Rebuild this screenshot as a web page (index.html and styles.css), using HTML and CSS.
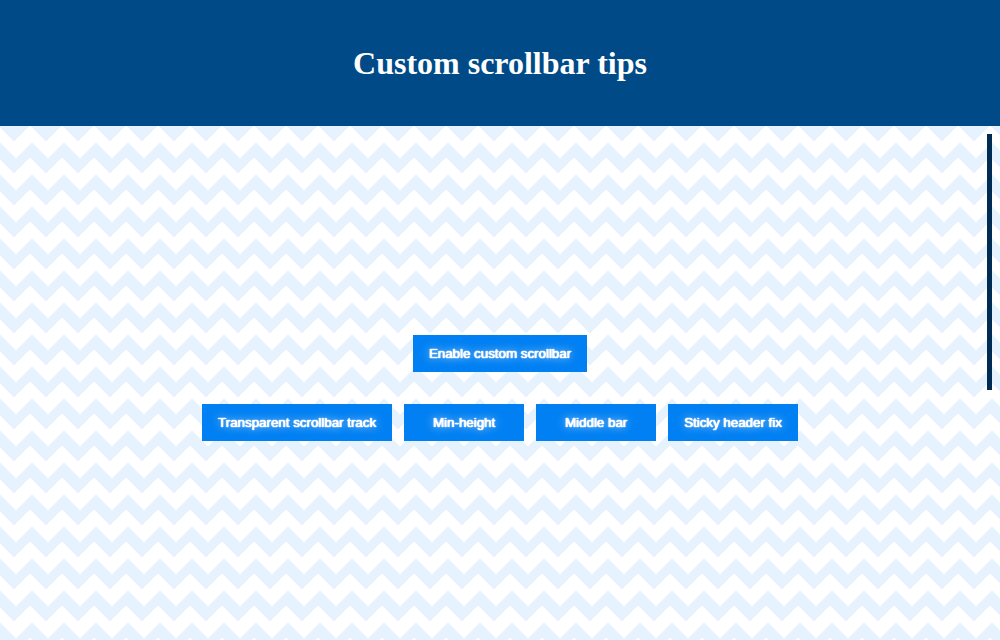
FILE: index.html
```html
<!DOCTYPE html>
<html lang="en">
<head>
  <meta charset="utf-8">
  <meta name="viewport" content="width=device-width, initial-scale=1">
  <title>Custom scrollbar tips</title>
  <link rel="stylesheet" href="styles.css">
</head>
<body>
  <header class="header">
    <h1 class="title">Custom scrollbar tips</h1>
  </header>
  <main class="content">
    <div class="row">
      <button type="button" class="button">Enable custom scrollbar</button>
    </div>
    <div class="row">
      <button type="button" class="button">Transparent scrollbar track</button>
      <button type="button" class="button">Min-height</button>
      <button type="button" class="button">Middle bar</button>
      <button type="button" class="button">Sticky header fix</button>
    </div>
    <div class="thumb" aria-hidden="true"></div>
  </main>
</body>
</html>
```
FILE: styles.css
```css
* {
  box-sizing: border-box;
}

body {
  display: flex;
  flex-direction: column;
  min-height: 100vh;
  margin: 0;
  font-family: "Liberation Serif", "Times New Roman", serif;
}

.header {
  padding: 45px 16px;
  background: #004a87;
  color: #fff;
  text-align: center;
}

.title {
  margin: 0;
  font-size: 32px;
  line-height: 36px;
}

/* Zigzag built from four corner triangles on a 32px tile */
.content {
  position: relative;
  flex: 1;
  display: flex;
  flex-direction: column;
  justify-content: center;
  gap: 32px;
  padding: 10px 16px 0;
  background-color: #fff;
  background-image:
    linear-gradient(135deg, #e6f3ff 24%, transparent 24%),
    linear-gradient(225deg, #e6f3ff 24%, transparent 24%),
    linear-gradient(315deg, #e6f3ff 24%, transparent 24%),
    linear-gradient(45deg, #e6f3ff 24%, transparent 24%);
  background-position: -18px 0, -18px 0, 0 0, 0 0;
  background-size: 32px 32px;
}

.row {
  display: flex;
  flex-wrap: wrap;
  justify-content: center;
  gap: 12px;
}

.button {
  min-width: 120px;
  padding: 11px 16px;
  border: 0;
  background: #0080f3;
  color: #fff;
  font-family: "Liberation Sans", Arial, sans-serif;
  text-shadow: 0 0 1px #fff, 0 0 1px #fff, 0 0 1px #fff, 0 0 10px #fff;
  cursor: pointer;
}

/* Overlay scrollbar thumb */
.thumb {
  position: absolute;
  top: 8px;
  right: 8px;
  width: 5px;
  height: calc(50% - 1px);
  background: #002c54;
}
```
